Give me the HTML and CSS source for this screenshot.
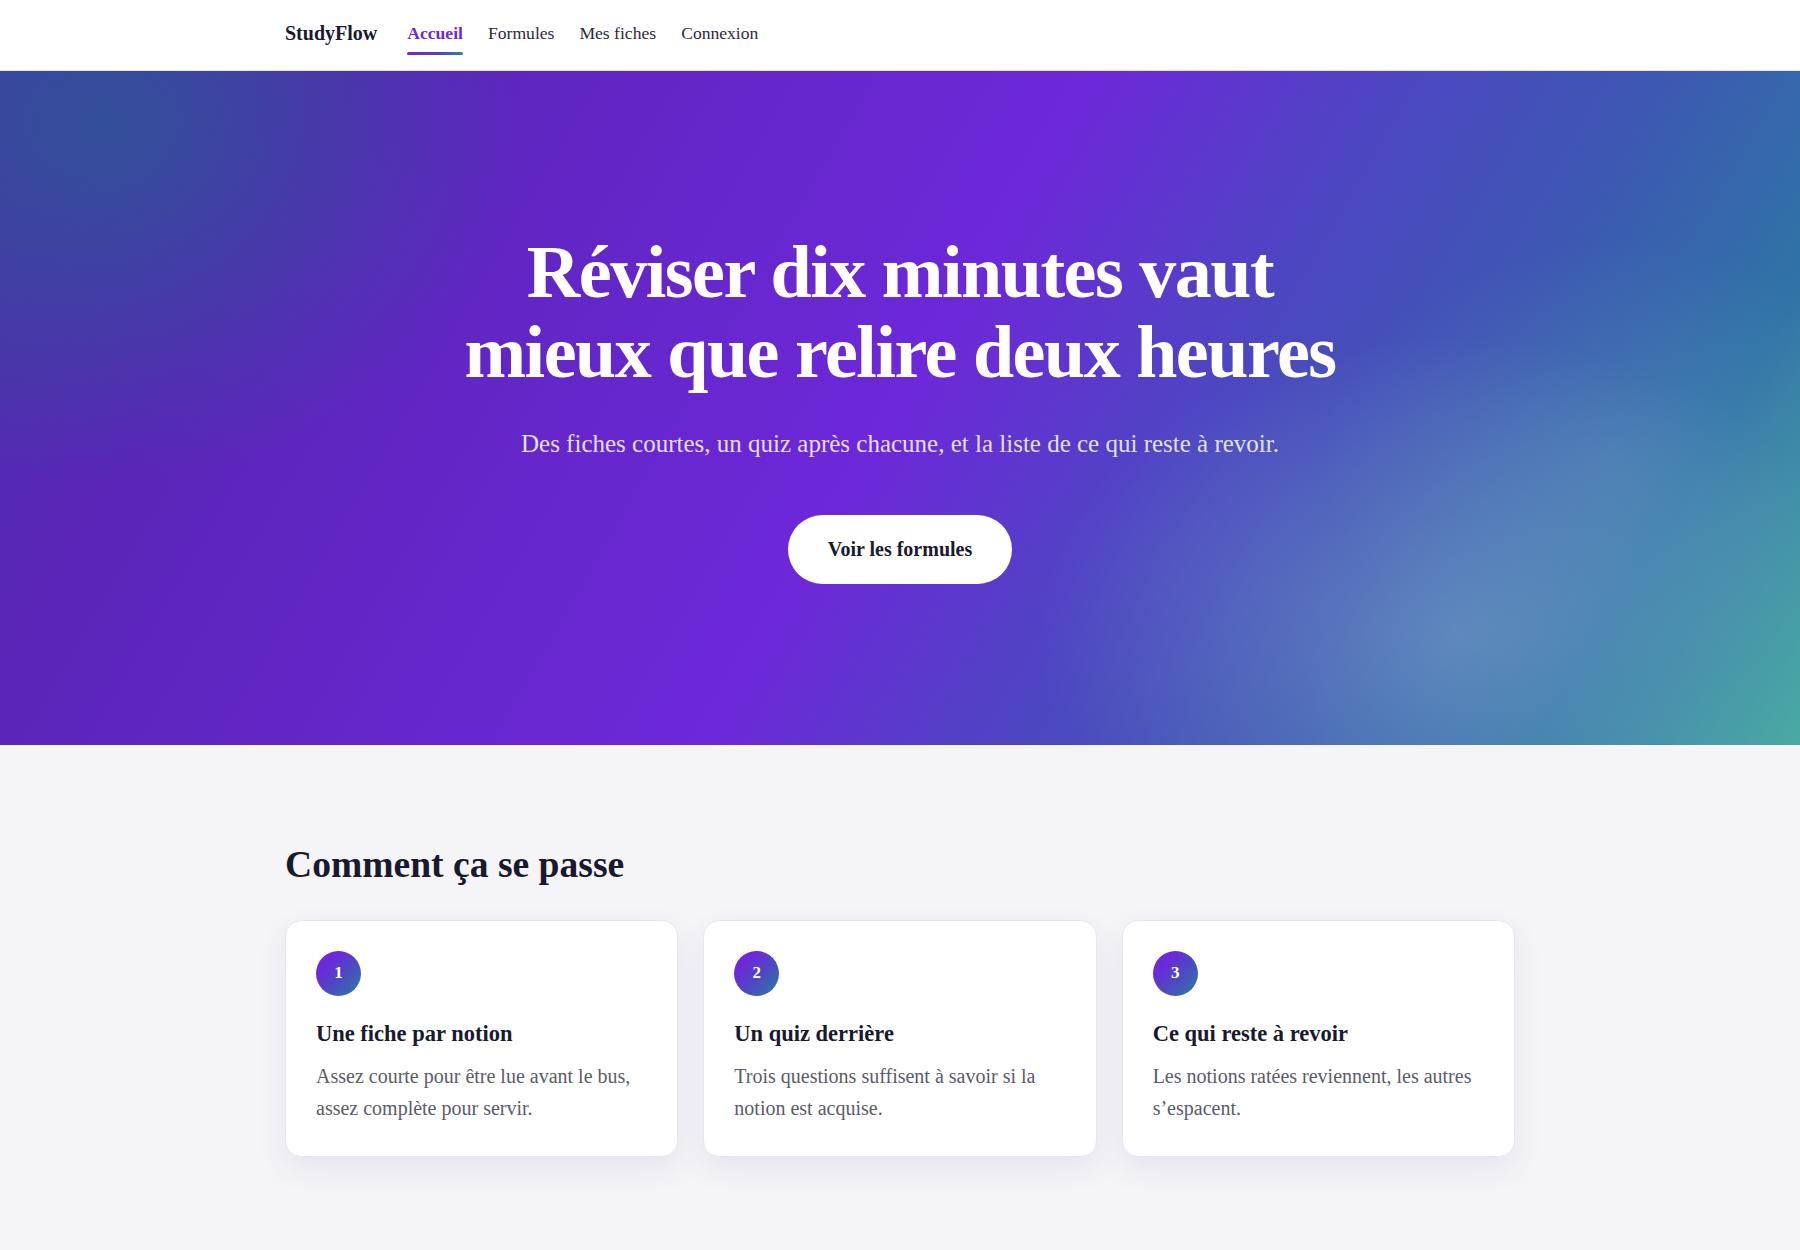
FILE: index.html
```html
<!DOCTYPE html>
<html lang="fr">
<head>
<meta charset="utf-8">
<title>StudyFlow</title>
<link rel="stylesheet" href="styles.css">
</head>
<body>
<header class="topbar">
  <nav class="container nav">
    <a class="brand" href="#">StudyFlow</a>
    <ul class="nav-links">
      <li><a class="nav-link active" href="#">Accueil</a></li>
      <li><a class="nav-link" href="#">Formules</a></li>
      <li><a class="nav-link" href="#">Mes fiches</a></li>
      <li><a class="nav-link" href="#">Connexion</a></li>
    </ul>
  </nav>
</header>

<section class="hero">
  <div class="hero-inner">
    <h1 class="hero-title">Réviser dix minutes vaut<br>mieux que relire deux heures</h1>
    <p class="hero-sub">Des fiches courtes, un quiz après chacune, et la liste de ce qui reste à revoir.</p>
    <a class="hero-btn" href="#">Voir les formules</a>
  </div>
</section>

<main class="steps">
  <div class="container">
    <h2 class="steps-title">Comment ça se passe</h2>
    <div class="cards">
      <article class="card">
        <span class="step-num">1</span>
        <h3 class="card-title">Une fiche par notion</h3>
        <p class="card-text">Assez courte pour être lue avant le bus, assez complète pour servir.</p>
      </article>
      <article class="card">
        <span class="step-num">2</span>
        <h3 class="card-title">Un quiz derrière</h3>
        <p class="card-text">Trois questions suffisent à savoir si la notion est acquise.</p>
      </article>
      <article class="card">
        <span class="step-num">3</span>
        <h3 class="card-title">Ce qui reste à revoir</h3>
        <p class="card-text">Les notions ratées reviennent, les autres s’espacent.</p>
      </article>
    </div>
  </div>
</main>
</body>
</html>
```

FILE: styles.css
```css
* { box-sizing: border-box; }

html, body {
  margin: 0;
  padding: 0;
}

body {
  font-family: "Liberation Serif", "Times New Roman", serif;
  color: #1a1a2e;
  background: #f5f5f7;
}

a { text-decoration: none; color: inherit; }

.container {
  max-width: 1230px;
  margin: 0 auto;
}

/* ---------- top bar ---------- */
.topbar {
  background: #ffffff;
  border-bottom: 1px solid #e6e4ee;
}

.nav {
  display: flex;
  align-items: center;
  height: 70px;
  padding-bottom: 4px;
}

.brand {
  font-size: 20px;
  font-weight: 700;
  color: #1a1a2e;
  margin-right: 30px;
}

.nav-links {
  display: flex;
  gap: 25px;
  list-style: none;
  margin: 0;
  padding: 0;
}

.nav-link {
  position: relative;
  display: block;
  font-size: 17.6px;
  color: #2a2a3c;
}

.nav-link.active {
  color: #6d28d9;
  font-weight: 700;
}

.nav-link.active::after {
  content: "";
  position: absolute;
  left: 0;
  right: 0;
  bottom: -11px;
  height: 3px;
  border-radius: 2px;
  background: linear-gradient(90deg, #6d28d9 0%, #5a3fc4 60%, #2a8a9a 100%);
}

/* ---------- hero ---------- */
.hero {
  background:
    radial-gradient(ellipse 420px 300px at 81% 84%, rgba(150, 185, 212, 0.42), rgba(150, 185, 212, 0.2) 50%, rgba(150, 185, 212, 0) 100%),
    radial-gradient(ellipse 300px 220px at 90% 58%, rgba(130, 175, 205, 0.22), rgba(130, 175, 205, 0) 100%),
    radial-gradient(ellipse 420px 360px at 6% 8%, rgba(45, 85, 150, 0.85), rgba(45, 85, 150, 0) 100%),
    linear-gradient(120deg, #4a33a8 0%, #5a25b8 16%, #6d28d9 50%, #4d46c2 64%, #3d58b2 76%, #2f74a6 88%, #45aaa0 100%);
  padding: 161px 20px 161px;
  color: #ffffff;
  text-align: center;
}

.hero-inner {
  display: flex;
  flex-direction: column;
  align-items: center;
}

.hero-title {
  margin: 0;
  font-size: 74px;
  line-height: 80px;
  font-weight: 700;
  letter-spacing: -0.02em;
}

.hero-sub {
  margin: 33px 0 0;
  font-size: 25px;
  line-height: 1.5;
  color: rgba(255, 255, 255, 0.86);
}

.hero-btn {
  margin-top: 52px;
  display: inline-block;
  background: #ffffff;
  color: #1a1a2e;
  font-size: 20px;
  font-weight: 700;
  line-height: 25px;
  padding: 22px 40px;
  border-radius: 999px;
}

/* ---------- steps ---------- */
.steps {
  background: #f5f5f7;
  padding: 97px 0 95px;
}

.steps-title {
  margin: 0;
  font-size: 37.6px;
  line-height: 1.2;
  font-weight: 700;
  color: #1a1a2e;
}

.cards {
  margin-top: 33px;
  display: grid;
  grid-template-columns: repeat(3, 1fr);
  gap: 25px;
}

.card {
  background: #ffffff;
  border: 1px solid #e7e6ee;
  border-radius: 16px;
  padding: 30px 30px 32px;
  box-shadow: 0 12px 30px rgba(70, 50, 140, 0.09);
}

.step-num {
  display: flex;
  align-items: center;
  justify-content: center;
  width: 45px;
  height: 45px;
  border-radius: 50%;
  background: linear-gradient(135deg, #6d28d9 25%, #4a4cc0 60%, #2a7fa3 100%);
  color: #ffffff;
  font-size: 17px;
  font-weight: 700;
}

.card-title {
  margin: 23px 0 0;
  font-size: 22.5px;
  line-height: 1.3;
  font-weight: 700;
  color: #1a1a2e;
}

.card-text {
  margin: 12px 0 0;
  font-size: 20px;
  line-height: 32px;
  color: #5b5b69;
}
```
